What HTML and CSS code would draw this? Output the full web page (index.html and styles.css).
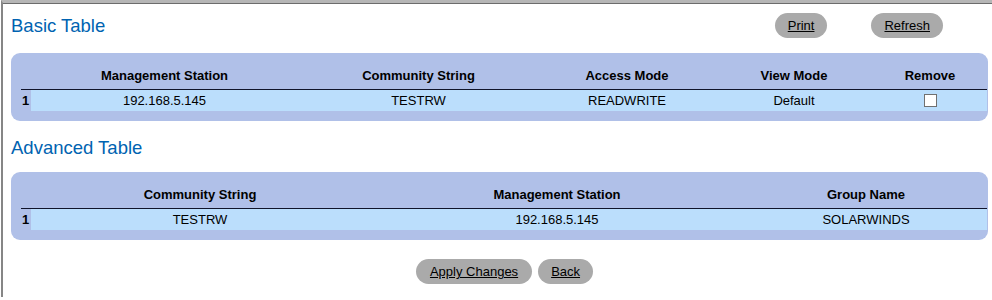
FILE: index.html
```html
<!DOCTYPE html>
<html>
<head>
<meta charset="utf-8">
<link rel="stylesheet" href="styles.css">
</head>
<body>
<div class="frame">
  <div class="section-head">
    <h1 class="title">Basic Table</h1>
    <div class="actions">
      <button class="btn">Print</button>
      <button class="btn">Refresh</button>
    </div>
  </div>
  <div class="panel">
    <table class="grid">
      <colgroup>
        <col class="c-idx"><col class="b1"><col class="b2"><col class="b3"><col class="b4"><col>
      </colgroup>
      <thead>
        <tr><th></th><th>Management Station</th><th>Community String</th><th>Access Mode</th><th>View Mode</th><th>Remove</th></tr>
      </thead>
      <tbody>
        <tr><td class="idx">1</td><td>192.168.5.145</td><td>TESTRW</td><td>READWRITE</td><td>Default</td><td><input type="checkbox" class="chk"></td></tr>
      </tbody>
    </table>
  </div>

  <h2 class="title sub">Advanced Table</h2>
  <div class="panel panel-adv">
    <table class="grid">
      <colgroup>
        <col class="c-idx"><col class="a1"><col class="a2"><col>
      </colgroup>
      <thead>
        <tr><th></th><th>Community String</th><th>Management Station</th><th>Group Name</th></tr>
      </thead>
      <tbody>
        <tr><td class="idx">1</td><td>TESTRW</td><td>192.168.5.145</td><td>SOLARWINDS</td></tr>
      </tbody>
    </table>
  </div>

  <div class="footer">
    <button class="btn btn-wide">Apply Changes</button>
    <button class="btn">Back</button>
  </div>
</div>
</body>
</html>
```
FILE: styles.css
```css
html, body {
  margin: 0;
  background: #ffffff;
}
body {
  font-family: "Liberation Sans", Arial, sans-serif;
  font-size: 13px;
  color: #000;
}
.frame {
  margin-left: 1px;
  border-left: 2px solid #868686;
  border-top: 3px solid #b6b6b6;
  box-shadow: inset 0 1px 0 #6c6c6c;
  min-height: 297px;
  padding: 10px 4px 0 8px;
  box-sizing: border-box;
}
.section-head {
  display: flex;
  align-items: center;
  height: 25px;
}
.title {
  margin: 0;
  font-size: 18.5px;
  font-weight: normal;
  color: #0063b1;
  line-height: 25px;
}
.title.sub {
  margin-top: 16px;
  line-height: 22px;
}
.actions {
  margin-left: auto;
  margin-right: 45px;
  display: flex;
  gap: 44px;
}
.btn {
  height: 25px;
  padding: 0 13px;
  border: 0;
  border-radius: 13px;
  background: #aaaaaa;
  font-family: "Liberation Sans", Arial, sans-serif;
  font-size: 13px;
  line-height: 25px;
  color: #000;
  text-decoration: underline;
}
.btn-wide {
  padding: 0 14px;
}
.panel {
  margin-top: 15px;
  background: #b0c0e8;
  border-radius: 9px;
  padding: 10px 1px 10px 10px;
}
.panel-adv {
  margin-top: 13px;
}
.grid {
  width: 100%;
  border-collapse: collapse;
  table-layout: fixed;
}
.c-idx { width: 10px; }
.b1 { width: 267px; }
.b2 { width: 241px; }
.b3 { width: 176px; }
.b4 { width: 158px; }
.a1 { width: 338px; }
.a2 { width: 376px; }
.grid th {
  font-weight: bold;
  padding: 5px 0 6px;
  line-height: 15px;
  border-bottom: 1px solid #10142a;
  text-align: center;
}
.grid td {
  padding: 3px 0;
  line-height: 15px;
  text-align: center;
  vertical-align: middle;
  background: #bbdefc;
}
.grid td.idx {
  background: transparent;
  text-align: left;
  font-weight: bold;
  padding-left: 1px;
}
.chk {
  appearance: none;
  -webkit-appearance: none;
  display: block;
  box-sizing: border-box;
  width: 13px;
  height: 13px;
  margin: 0 auto;
  border: 1px solid #707070;
  background: #fff;
}
.footer {
  margin-top: 19px;
  display: flex;
  justify-content: center;
  gap: 6px;
  padding-left: 10px;
}
```
